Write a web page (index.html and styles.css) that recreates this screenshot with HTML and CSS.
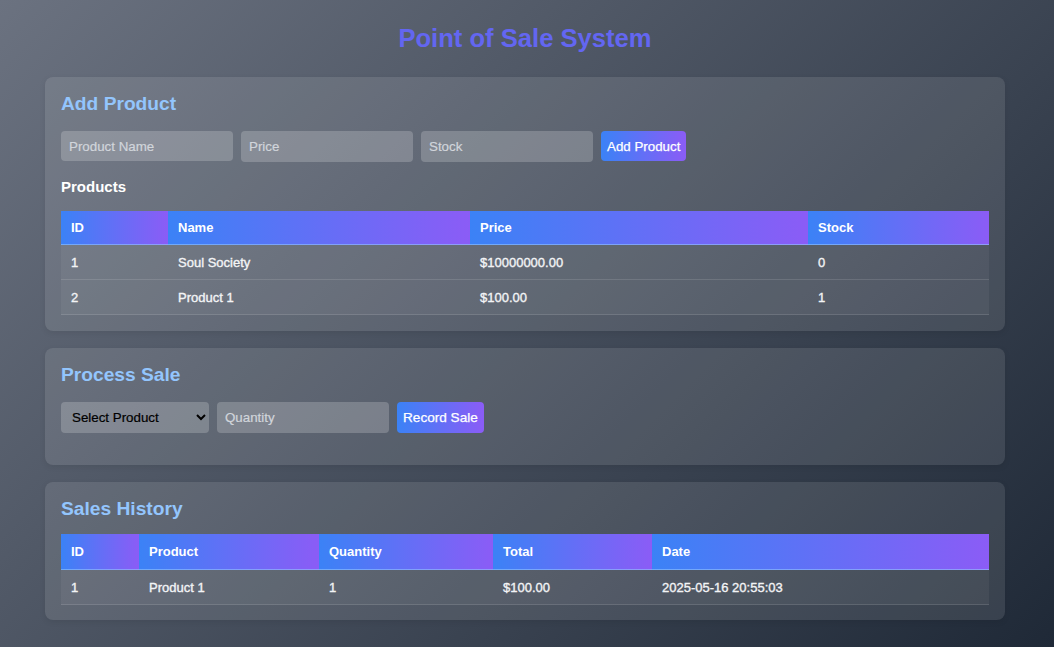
FILE: index.html
```html
<!DOCTYPE html>
<html lang="en">
<head>
<meta charset="utf-8">
<title>Point of Sale System</title>
<link rel="stylesheet" href="styles.css">
</head>
<body>
<div class="container">
  <h1 class="title">Point of Sale System</h1>

  <section class="card">
    <h2 class="card-title">Add Product</h2>
    <div class="input-group">
      <input class="field" type="text" placeholder="Product Name">
      <input class="field" type="text" placeholder="Price">
      <input class="field" type="text" placeholder="Stock">
      <button class="btn">Add Product</button>
    </div>
    <h3 class="sub-title">Products</h3>
    <table class="data-table">
      <colgroup>
        <col class="c-p-id"><col class="c-p-name"><col class="c-p-price"><col class="c-p-stock">
      </colgroup>
      <thead>
        <tr><th>ID</th><th>Name</th><th>Price</th><th>Stock</th></tr>
      </thead>
      <tbody>
        <tr><td>1</td><td>Soul Society</td><td>$10000000.00</td><td>0</td></tr>
        <tr><td>2</td><td>Product 1</td><td>$100.00</td><td>1</td></tr>
      </tbody>
    </table>
  </section>

  <section class="card">
    <h2 class="card-title">Process Sale</h2>
    <div class="input-group">
      <select class="field select">
        <option>Select Product</option>
      </select>
      <input class="field" type="text" placeholder="Quantity">
      <button class="btn btn-lg">Record Sale</button>
    </div>
  </section>

  <section class="card card-last">
    <h2 class="card-title tight">Sales History</h2>
    <table class="data-table sales-table">
      <colgroup>
        <col class="c-s-id"><col class="c-s-product"><col class="c-s-qty"><col class="c-s-total"><col class="c-s-date">
      </colgroup>
      <thead>
        <tr><th>ID</th><th>Product</th><th>Quantity</th><th>Total</th><th>Date</th></tr>
      </thead>
      <tbody>
        <tr><td>1</td><td>Product 1</td><td>1</td><td>$100.00</td><td>2025-05-16 20:55:03</td></tr>
      </tbody>
    </table>
  </section>
</div>
</body>
</html>
```

FILE: styles.css
```css
* { box-sizing: border-box; }

html, body {
  margin: 0;
  padding: 0;
}

body {
  min-height: 100vh;
  font-family: "Liberation Sans", Arial, sans-serif;
  color: #ffffff;
  background: linear-gradient(135deg, #6b7280 0%, #1f2937 100%);
}

.container {
  max-width: 960px;
  margin: 0 auto;
  padding: 23px 0 10px;
  position: relative;
  left: -2px;
}

.title {
  margin: 0 0 24px;
  text-align: center;
  font-size: 25.6px;
  line-height: 30px;
  font-weight: bold;
  color: #6366f1;
}

.card {
  background: rgba(255, 255, 255, 0.1);
  border-radius: 8px;
  padding: 16px;
  margin-bottom: 17px;
  box-shadow: 0 2px 6px rgba(0, 0, 0, 0.08);
}

.card-last { padding-bottom: 15px; }

.card-title {
  margin: 0 0 16px;
  font-size: 19.2px;
  line-height: 22px;
  font-weight: bold;
  color: #93c5fd;
}

.card-title.tight { margin-bottom: 14px; }

.input-group {
  display: flex;
  gap: 8px;
  margin-bottom: 16px;
}

.field {
  width: 172px;
  height: 30px;
  padding: 8px;
  border: none;
  border-radius: 4px;
  background: rgba(255, 255, 255, 0.2);
  color: #ffffff;
  font-family: "Liberation Sans", Arial, sans-serif;
  font-size: 13.33px;
  outline: none;
  -webkit-text-stroke: 0.2px;
}

.field::placeholder {
  color: #d1d5db;
}

.select {
  width: 148px;
  height: 31px;
  padding: 0 4px 0 7px;
  color: #000000;
}

.input-group .field + .field { height: 31px; }

.btn {
  height: 30px;
  padding: 0 6px;
  border: none;
  border-radius: 4px;
  background: linear-gradient(to right, #3b82f6, #8b5cf6);
  color: #ffffff;
  font-family: "Liberation Sans", Arial, sans-serif;
  font-size: 13.33px;
  cursor: pointer;
  -webkit-text-stroke: 0.25px;
}

.btn-lg {
  height: 31px;
  font-size: 13.6px;
}

.sub-title {
  margin: 0 0 16px;
  font-size: 15px;
  line-height: 17px;
  font-weight: bold;
  color: #ffffff;
}

.data-table {
  width: 100%;
  border-collapse: collapse;
  font-size: 13px;
}

.data-table th,
.data-table td {
  text-align: left;
  padding: 10px 10px 9px;
  line-height: 15px;
  border-bottom: 1px solid rgba(255, 255, 255, 0.12);
}

.data-table th {
  font-weight: bold;
  background: linear-gradient(to right, #3b82f6, #8b5cf6);
  padding: 9px 10px;
  border-bottom-color: rgba(147, 197, 253, 0.6);
}

.sales-table th {
  padding: 10px 10px;
}

.data-table td {
  background: rgba(255, 255, 255, 0.05);
  color: #f3f4f6;
  -webkit-text-stroke: 0.35px;
}

.c-p-id { width: 107px; }
.c-p-name { width: 302px; }
.c-p-price { width: 338px; }
.c-p-stock { width: 181px; }

.c-s-id { width: 78px; }
.c-s-product { width: 180px; }
.c-s-qty { width: 174px; }
.c-s-total { width: 159px; }
.c-s-date { width: 337px; }
```
